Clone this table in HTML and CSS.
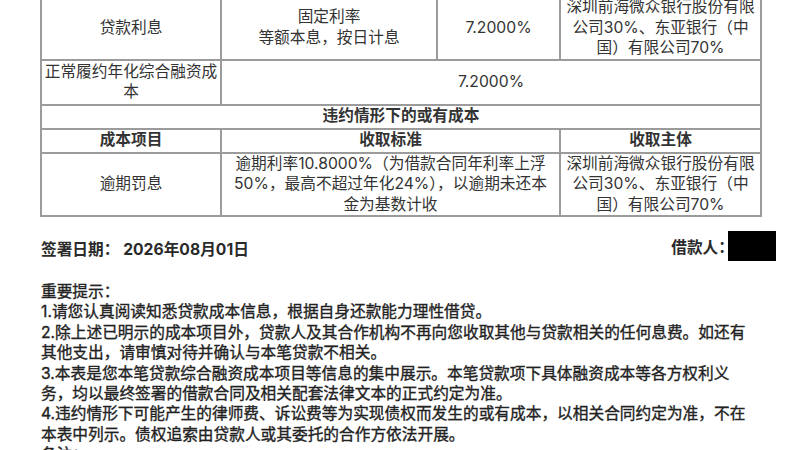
FILE: index.html
```html
<!DOCTYPE html>
<html lang="zh-CN">
<head>
<meta charset="utf-8">
<title>贷款成本信息</title>
<link rel="stylesheet" href="styles.css">
</head>
<body>
<div class="page">
  <table class="cost">
    <colgroup>
      <col class="c1"><col class="c2"><col class="c3"><col class="c4">
    </colgroup>
    <tr class="r1">
      <td>贷款利息</td>
      <td>固定利率<br>等额本息，按日计息</td>
      <td>7.2000%</td>
      <td>深圳前海微众银行股份有限<br>公司30%、东亚银行（中<br>国）有限公司70%</td>
    </tr>
    <tr class="r2">
      <td>正常履约年化综合融资成<br>本</td>
      <td colspan="3">7.2000%</td>
    </tr>
    <tr class="r3">
      <td colspan="4" class="bold">违约情形下的或有成本</td>
    </tr>
    <tr class="r4">
      <td class="bold">成本项目</td>
      <td colspan="2" class="bold">收取标准</td>
      <td class="bold">收取主体</td>
    </tr>
    <tr class="r5">
      <td>逾期罚息</td>
      <td colspan="2">逾期利率10.8000%（为借款合同年利率上浮<br>50%，最高不超过年化24%），以逾期未还本<br>金为基数计收</td>
      <td>深圳前海微众银行股份有限<br>公司30%、东亚银行（中<br>国）有限公司70%</td>
    </tr>
  </table>

  <div class="sign">
    <span class="date">签署日期： 2026年08月01日</span>
    <span class="borrower"><span class="label">借款人：</span><span class="redact"></span></span>
  </div>

  <div class="notes">
    <p>重要提示：</p>
    <p>1.请您认真阅读知悉贷款成本信息，根据自身还款能力理性借贷。</p>
    <p>2.除上述已明示的成本项目外，贷款人及其合作机构不再向您收取其他与贷款相关的任何息费。如还有<br>其他支出，请审慎对待并确认与本笔贷款不相关。</p>
    <p>3.本表是您本笔贷款综合融资成本项目等信息的集中展示。本笔贷款项下具体融资成本等各方权利义<br>务，均以最终签署的借款合同及相关配套法律文本的正式约定为准。</p>
    <p>4.违约情形下可能产生的律师费、诉讼费等为实现债权而发生的或有成本，以相关合同约定为准，不在<br>本表中列示。债权追索由贷款人或其委托的合作方依法开展。</p>
    <p>备注：</p>
  </div>
</div>
</body>
</html>
```

FILE: styles.css
```css
html, body {
  margin: 0;
  padding: 0;
  background: #ffffff;
}

body {
  font-family: "Inter", "Noto Sans CJK SC", "Noto Sans", sans-serif;
  color: #333333;
  font-size: 15.7px;
  overflow: hidden;
}

.page {
  padding: 0 24px 0 40px;
  margin-top: -5px;
}

.cost {
  width: 720px;
  table-layout: fixed;
  border-collapse: collapse;
  border: 2px solid #9b9b9b;
}

.cost .c1 { width: 180px; }
.cost .c2 { width: 216px; }
.cost .c3 { width: 123px; }
.cost .c4 { width: 201px; }

.cost td {
  border: 2px solid #9b9b9b;
  padding: 0 2px;
  text-align: center;
  vertical-align: middle;
  line-height: 20.5px;
  white-space: nowrap;
}

.cost .r1 td { height: 58px; }
.cost .r2 td { height: 43px; }
.cost .r3 td { height: 22px; }
.cost .r4 td { height: 22px; }
.cost .r5 td { height: 61px; }

.cost .bold {
  font-weight: 700;
}

.sign {
  width: 736px;
  margin-top: 14px;
  height: 30px;
  display: flex;
  justify-content: space-between;
  align-items: center;
  font-weight: 700;
  color: #2a2a2a;
}

.sign .date {
  margin-top: 5px;
  margin-left: 1px;
}

.borrower {
  display: flex;
  align-items: center;
}

.borrower .label {
  margin-right: -6px;
}

.redact {
  display: inline-block;
  width: 48px;
  height: 30px;
  background: #000000;
}

.notes {
  margin-top: 21px;
  color: #222222;
  line-height: 20.4px;
  white-space: nowrap;
  margin-left: 1px;
  -webkit-text-stroke: 0.35px #222222;
}

.notes p {
  margin: 0;
}
```
